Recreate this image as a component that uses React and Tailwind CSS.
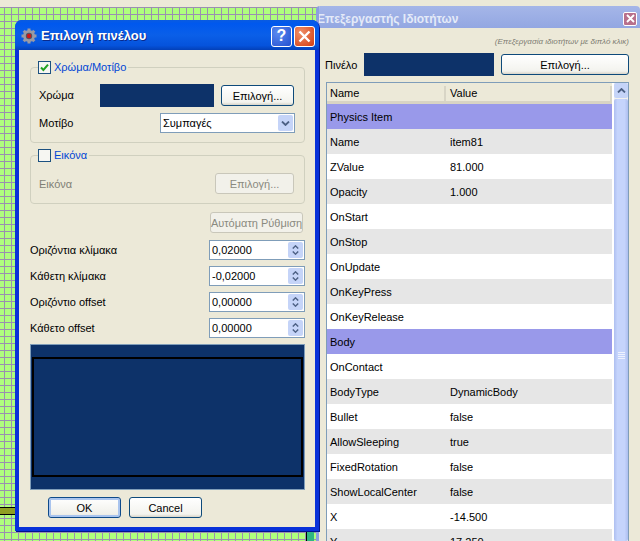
import React from "react";

const FONT = { fontFamily: '"Liberation Sans", "Noto Sans", sans-serif' };

function XpButton({ children, className = "", disabled = false, focused = false }) {
  const tone = disabled
    ? "border-[#c9c7ba] text-[#8a8a80] bg-[#f2f1ea]"
    : focused
    ? "border-[#0e4a8a] text-black bg-[linear-gradient(#ffffff,#f0f0ea_85%,#dcd8cc)] shadow-[inset_0_0_0_2px_#a9c4ee]"
    : "border-[#0e4a7a] text-black bg-[linear-gradient(#ffffff,#f3f3ee_85%,#d8d4c8)]";
  return (
    <div className={`flex items-center justify-center whitespace-nowrap rounded-[3px] border pt-[1px] text-[11px] leading-none ${tone} ${className}`}>
      {children}
    </div>
  );
}

function Check({ checked }) {
  return (
    <div className="flex h-[13px] w-[13px] shrink-0 items-center justify-center border border-[#1c5180] bg-[#f6f6f2]">
      {checked && (
        <svg width="9" height="9" viewBox="0 0 9 9">
          <path d="M1 4.5 L3.4 7 L8 1.6" fill="none" stroke="#21a121" strokeWidth="2" />
        </svg>
      )}
    </div>
  );
}

function Chevron({ up = false, width = 9, height = 5, color = "#4d6185" }) {
  return (
    <svg width={width} height={height} viewBox="0 0 9 5">
      <path d={up ? "M1 4.5 L4.5 1 L8 4.5" : "M1 .5 L4.5 4 L8 .5"} fill="none" stroke={color} strokeWidth="1.8" />
    </svg>
  );
}

function Spin({ value }) {
  return (
    <div className="flex h-[20px] w-[96px] items-center border border-[#7f9db9] bg-white pl-[2px] pr-[1px] text-[11px]">
      <span className="flex-1">{value}</span>
      <div className="flex h-[16px] w-[15px] flex-col items-center justify-center gap-[2px] rounded-[2px] bg-[#c5d4f8]">
        <Chevron up width={7} height={4} />
        <Chevron width={7} height={4} />
      </div>
    </div>
  );
}

function SpinRow({ label, value }) {
  return (
    <div className="flex h-[20px] items-center justify-between">
      <span className="text-[11px] text-black">{label}</span>
      <Spin value={value} />
    </div>
  );
}

function GroupBox({ title, checked, className = "", children }) {
  return (
    <div className={`relative rounded-[4px] border border-[#d0d0bf] ${className}`}>
      <div className="absolute left-[7px] top-[-7px] flex items-center gap-[3px] bg-[#ece9d8] pr-[2px]">
        <Check checked={checked} />
        <span className="text-[11px] leading-[13px] text-[#0046d5]">{title}</span>
      </div>
      {children}
    </div>
  );
}

function Dialog() {
  return (
    <div className="absolute left-[15px] top-[20px] z-10 flex h-[511px] w-[304px] flex-col overflow-hidden rounded-t-[7px] bg-[#0831d9] shadow-[1px_1px_0_#00138c]">
      <div className="flex h-[30px] shrink-0 items-center bg-[linear-gradient(#0a5be0,#0058ee_12%,#0a5fe8_50%,#0553dc_85%,#0340b8)] pl-[6px] pr-[4px] pt-[2px]">
        <svg width="16" height="16" viewBox="0 0 16 16" className="mr-[4px] shrink-0">
          <g fill="#9a9aa4">
            <circle cx="8" cy="8" r="6" />
            <rect x="6.5" y="0.5" width="3" height="15" />
            <rect x="0.5" y="6.5" width="15" height="3" />
            <rect x="6.5" y="0.5" width="3" height="15" transform="rotate(45 8 8)" />
            <rect x="6.5" y="0.5" width="3" height="15" transform="rotate(-45 8 8)" />
          </g>
          <circle cx="8" cy="8" r="3.2" fill="#55555f" />
          <circle cx="8" cy="8" r="2.2" fill="#d01414" />
        </svg>
        <span className="flex-1 text-[13px] font-bold text-white [text-shadow:1px_1px_0_#0a2a8c]">Επιλογή πινέλου</span>
        <div className="flex h-[21px] w-[21px] items-center justify-center rounded-[3px] border border-white bg-[radial-gradient(circle_at_30%_30%,#5a8af0,#2450d0)] text-[16px] font-bold leading-none text-white">
          ?
        </div>
        <div className="ml-[2px] flex h-[21px] w-[21px] items-center justify-center rounded-[3px] border border-white bg-[radial-gradient(circle_at_30%_30%,#f0906a,#d23c10)]">
          <svg width="13" height="13" viewBox="0 0 13 13">
            <path d="M1.5 1.5 L11.5 11.5 M11.5 1.5 L1.5 11.5" stroke="#fff" strokeWidth="2.4" />
          </svg>
        </div>
      </div>

      <div className="mx-[4px] mb-[4px] flex flex-1 flex-col bg-[#ece9d8] pl-[11px] pr-[10px] pt-[17px]">
        <GroupBox title="Χρώμα/Μοτίβο" checked className="h-[76px] pl-[8px] pr-[9px] pt-[16px]">
          <div className="flex h-[23px] items-center">
            <span className="w-[61px] text-[11px]">Χρώμα</span>
            <div className="h-[23px] w-[114px] bg-[#0d3269]" />
            <XpButton className="ml-[7px] h-[21px] w-[73px]">Επιλογή...</XpButton>
          </div>
          <div className="mt-[6px] flex h-[20px] items-center justify-between">
            <span className="text-[11px]">Μοτίβο</span>
            <div className="flex h-[20px] w-[135px] items-center border border-[#7f9db9] bg-white pl-[2px] pr-[1px] text-[11px]">
              <span className="flex-1">Συμπαγές</span>
              <div className="flex h-[16px] w-[15px] items-center justify-center rounded-[2px] bg-[#c5d4f8]">
                <Chevron />
              </div>
            </div>
          </div>
        </GroupBox>

        <GroupBox title="Εικόνα" className="mt-[12px] h-[49px] pl-[8px] pr-[10px] pt-[17px]">
          <div className="flex h-[21px] items-center justify-between">
            <span className="pt-[1px] text-[11px] text-[#7f7f76]">Εικόνα</span>
            <XpButton disabled className="h-[21px] w-[79px]">Επιλογή...</XpButton>
          </div>
        </GroupBox>

        <XpButton disabled className="ml-[180px] mt-[8px] h-[21px] w-[93px] text-[10.5px]">Αυτόματη Ρύθμιση</XpButton>

        <div className="mt-[7px] flex flex-col gap-[6px]">
          <SpinRow label="Οριζόντια κλίμακα" value="0,02000" />
          <SpinRow label="Κάθετη κλίμακα" value="-0,02000" />
          <SpinRow label="Οριζόντιο offset" value="0,00000" />
          <SpinRow label="Κάθετο offset" value="0,00000" />
        </div>

        <div className="mt-[6px] flex h-[146px] flex-col border border-[#7f9db9] bg-[#0d3269] px-[1px] pt-[12px]">
          <div className="h-[120px] border-2 border-black" />
        </div>

        <div className="mt-[7px] flex gap-[8px] pl-[18px]">
          <XpButton focused className="h-[21px] w-[73px]">OK</XpButton>
          <XpButton className="h-[21px] w-[73px]">Cancel</XpButton>
        </div>
      </div>
    </div>
  );
}

const ROWS = [
  { name: "Physics Item", section: true },
  { name: "Name", value: "item81" },
  { name: "ZValue", value: "81.000" },
  { name: "Opacity", value: "1.000" },
  { name: "OnStart" },
  { name: "OnStop" },
  { name: "OnUpdate" },
  { name: "OnKeyPress" },
  { name: "OnKeyRelease" },
  { name: "Body", section: true },
  { name: "OnContact" },
  { name: "BodyType", value: "DynamicBody" },
  { name: "Bullet", value: "false" },
  { name: "AllowSleeping", value: "true" },
  { name: "FixedRotation", value: "false" },
  { name: "ShowLocalCenter", value: "false" },
  { name: "X", value: "-14.500" },
  { name: "Y", value: "17.250" },
];

function Panel() {
  return (
    <div className="absolute bottom-0 left-[316px] right-0 top-[6px] flex flex-col overflow-hidden rounded-t-[4px] border-l-[3px] border-[#8c9fe0] bg-[#ece9d8]">
      <div className="-ml-[3px] flex h-[22px] shrink-0 items-center bg-[linear-gradient(#a5b6e8,#93a7e2)] pl-[1px] pr-[3px] pt-[3px]">
        <span className="flex-1 whitespace-nowrap text-[12px] font-bold text-[#e4eaf8]">Επεξεργαστής Ιδιοτήτων</span>
        <div className="flex h-[14px] w-[14px] items-center justify-center rounded-[2px] border border-white bg-[#b8708c]">
          <svg width="9" height="9" viewBox="0 0 9 9">
            <path d="M1 1 L8 8 M8 1 L1 8" stroke="#fff" strokeWidth="1.8" />
          </svg>
        </div>
      </div>

      <div className="flex flex-1 flex-col overflow-hidden pl-[7px] pr-[11px]">
        <div className="h-[25px] pt-[9px] text-right text-[8px] italic leading-[10px] text-[#7c7c72]">
          (Επεξεργασία ιδιοτήτων με διπλό κλικ)
        </div>
        <div className="flex h-[23px] items-center">
          <span className="-ml-[1px] w-[39px] pt-[2px] text-[11px]">Πινέλο</span>
          <div className="h-[23px] w-[130px] bg-[#0d3269]" />
          <XpButton className="ml-[7px] h-[21px] w-[128px]">Επιλογή...</XpButton>
        </div>

        <div className="mt-[6px] flex flex-1 overflow-hidden border border-b-0 border-[#7f9db9] bg-white">
          <div className="flex flex-1 flex-col">
            <div className="flex h-[21px] shrink-0 items-center border-b-[3px] border-[#d8d4c4] bg-[#ece9d8] pt-[2px] text-[11px]">
              <div className="w-[119px] border-r-2 border-[#d8d5c6] pl-[3px] leading-[15px]">Name</div>
              <div className="flex-1 border-r-2 border-[#d8d5c6] pl-[4px] leading-[15px]">Value</div>
            </div>
            {ROWS.map((r, i) => (
              <div
                key={r.name}
                className={`flex h-[25px] shrink-0 items-center pt-[2px] text-[11px] ${
                  r.section ? "bg-[#9999ea]" : i % 2 === 1 ? "bg-[#e6e6e6]" : "bg-white"
                }`}
              >
                <span className="w-[120px] pl-[3px]">{r.name}</span>
                <span className="pl-[3px]">{r.value}</span>
              </div>
            ))}
          </div>
          <div className="flex w-[16px] shrink-0 flex-col border-l-2 border-white bg-[#f3f2ee]">
            <div className="flex h-[15px] shrink-0 items-center justify-center rounded-[2px] bg-[#c5d4f8]">
              <Chevron up />
            </div>
            <div className="mt-[1px] flex flex-1 items-start justify-center rounded-[2px] bg-[linear-gradient(90deg,#aebff0,#c5d4fc_25%,#c5d4fc_75%,#aebff0)] pt-[253px]">
              <div className="flex w-[7px] flex-col gap-[1px]">
                <div className="h-[1px] bg-[#eef2fe]" />
                <div className="h-[1px] bg-[#eef2fe]" />
                <div className="h-[1px] bg-[#eef2fe]" />
                <div className="h-[1px] bg-[#eef2fe]" />
              </div>
            </div>
          </div>
        </div>
      </div>
    </div>
  );
}

export default function App() {
  return (
    <div style={FONT} className="relative h-[541px] w-[640px] overflow-hidden bg-[#ece9d8] text-black">
      <div className="absolute left-0 top-[7px] h-[534px] w-[320px] bg-[#afff7d] bg-[linear-gradient(90deg,#9a90b0_1px,transparent_1px),linear-gradient(#9a90b0_1px,transparent_1px)] bg-[length:7px_7px] bg-[position:4px_0px]" />
      <div className="absolute left-0 top-[507px] h-[8px] w-[16px] border-y border-black bg-[#8f9f22]" />
      <div className="absolute left-[306px] top-[532px] h-[9px] w-[8px] border-l border-black bg-[#2fb583]" />
      <Panel />
      <Dialog />
    </div>
  );
}
